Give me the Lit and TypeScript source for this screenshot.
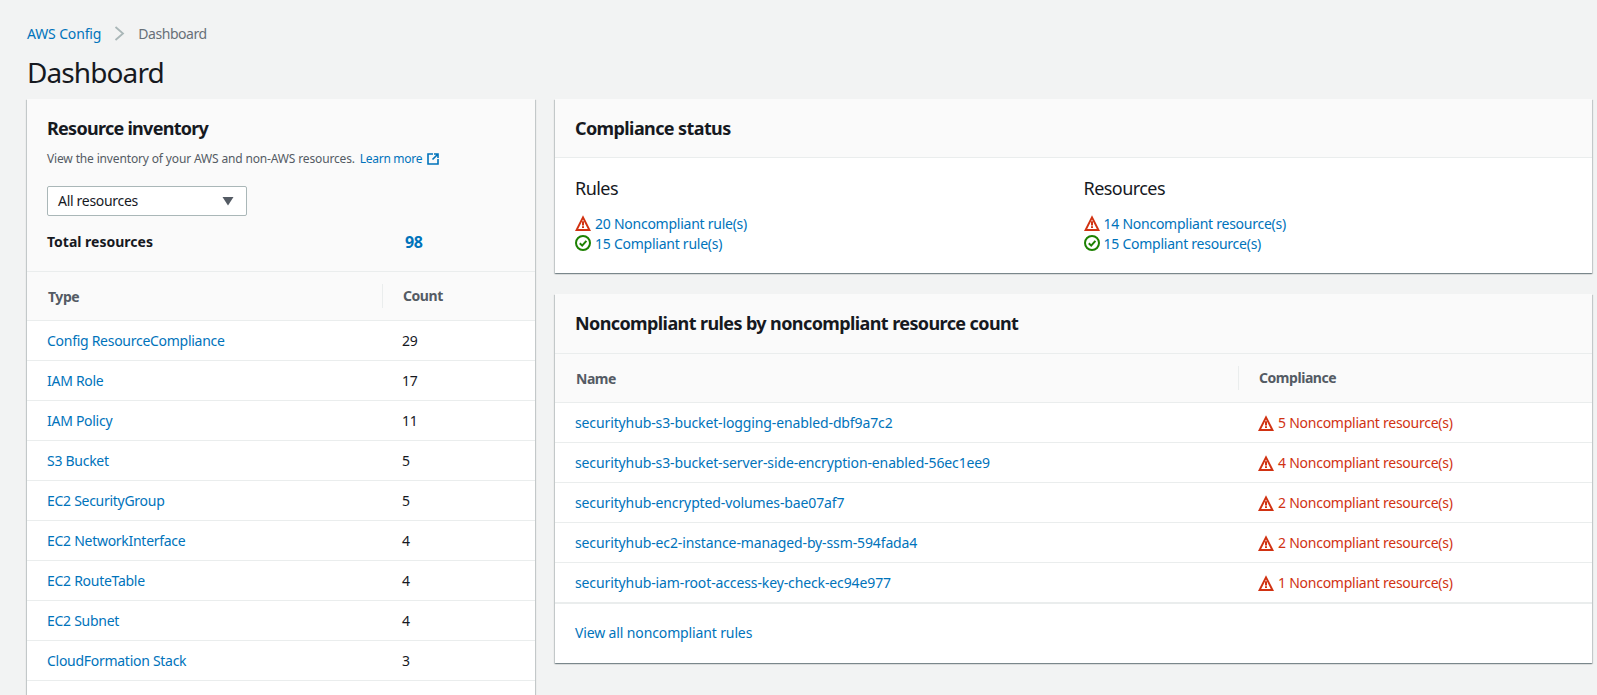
import { LitElement, html, css, svg } from 'lit';
import { customElement } from 'lit/decorators.js';

const inventory = [
  ['Config ResourceCompliance', 29],
  ['IAM Role', 17],
  ['IAM Policy', 11],
  ['S3 Bucket', 5],
  ['EC2 SecurityGroup', 5],
  ['EC2 NetworkInterface', 4],
  ['EC2 RouteTable', 4],
  ['EC2 Subnet', 4],
  ['CloudFormation Stack', 3],
];

const rules = [
  ['securityhub-s3-bucket-logging-enabled-dbf9a7c2', 5],
  ['securityhub-s3-bucket-server-side-encryption-enabled-56ec1ee9', 4],
  ['securityhub-encrypted-volumes-bae07af7', 2],
  ['securityhub-ec2-instance-managed-by-ssm-594fada4', 2],
  ['securityhub-iam-root-access-key-check-ec94e977', 1],
];

const warnIcon = html`<svg class="icon" viewBox="0 0 16 16">
  ${svg`<path fill-rule="evenodd" fill="#d13212" d="M8 0.2 16 16H0zM8 4.4 3.2 14h9.6z"/>
  <path fill="#d13212" d="M7 6.2h2v4.2H7zM7 11.2h2V13H7z"/>`}
</svg>`;

const okIcon = html`<svg class="icon" viewBox="0 0 16 16" fill="none">
  ${svg`<circle cx="8" cy="8" r="7" stroke="#1d8102" stroke-width="2"/>
  <path d="M4.8 8.2 7.2 10.6 11.4 5.8" stroke="#1d8102" stroke-width="2"/>`}
</svg>`;

@customElement('app-root')
export class AppRoot extends LitElement {
  static styles = css`
    :host {
      display: block;
      height: 695px;
      overflow: hidden;
      background: #f2f3f3;
      font-family: 'Noto Sans', sans-serif;
      font-size: 14px;
      letter-spacing: -0.25px;
      color: #16191f;
    }
    a {
      color: #0073bb;
      text-decoration: none;
    }
    .page {
      padding: 22px 5px 0 27px;
    }
    .crumbs {
      display: flex;
      align-items: center;
      height: 22px;
      color: #687078;
    }
    .crumbs a {
      letter-spacing: -0.15px;
    }
    .crumbs span {
      letter-spacing: -0.45px;
    }
    .crumbs svg {
      width: 11px;
      height: 15px;
      margin: 0 13px 0 13px;
    }
    h1 {
      margin: 10px 0 0;
      height: 45px;
      font-size: 28px;
      line-height: 36px;
      font-weight: 400;
      letter-spacing: -0.9px;
    }
    .columns {
      display: grid;
      grid-template-columns: 508px 1037px;
      gap: 20px;
      align-items: start;
    }
    .card {
      background: #fff;
      box-shadow: 0 1px 1px 0 rgba(0, 28, 36, 0.3), 1px 1px 1px 0 rgba(0, 28, 36, 0.15),
        -1px 1px 1px 0 rgba(0, 28, 36, 0.15);
    }
    .stack {
      display: grid;
      gap: 21px;
    }
    .inv-head {
      height: 173px;
      box-sizing: border-box;
      padding: 17px 20px 0;
      background: #fafafa;
      border-bottom: 1px solid #eaeded;
    }
    h2 {
      margin: 0;
      font-size: 18px;
      line-height: 24px;
      font-weight: 700;
      letter-spacing: -0.6px;
    }
    .inv-head h2 {
      letter-spacing: -0.72px;
    }
    .desc {
      margin-top: 11px;
      font-size: 12px;
      line-height: 16px;
      letter-spacing: -0.15px;
      color: #545b64;
      display: flex;
      align-items: center;
    }
    .desc a {
      margin-left: 5px;
      display: flex;
      align-items: center;
      letter-spacing: -0.3px;
    }
    .desc svg {
      width: 12px;
      height: 12px;
      margin-left: 5px;
    }
    .select {
      margin-top: 19px;
      width: 200px;
      height: 30px;
      box-sizing: border-box;
      border: 1px solid #aab7b8;
      border-radius: 2px;
      background: #fff;
      display: flex;
      align-items: center;
      justify-content: space-between;
      padding: 0 12px 0 10px;
    }
    .select span {
      letter-spacing: -0.3px;
      padding-bottom: 1px;
    }
    .select svg {
      width: 12px;
      height: 9px;
    }
    .total {
      display: grid;
      grid-template-columns: 358px 1fr;
      margin-top: 15px;
      line-height: 22px;
      font-weight: 700;
      letter-spacing: 0;
    }
    .total a {
      font-size: 16px;
      letter-spacing: -0.4px;
    }
    .row {
      display: grid;
      align-items: center;
      height: 40px;
      box-sizing: border-box;
      border-bottom: 1px solid #eaeded;
      padding-left: 20px;
    }
    .inv .row {
      grid-template-columns: 355px 1fr;
    }
    .inv .row a {
      letter-spacing: -0.28px;
    }
    .rules .row {
      grid-template-columns: 683px 1fr;
    }
    .rules .row a {
      letter-spacing: -0.12px;
    }
    .row.head {
      height: 49px;
      background: #fafafa;
      color: #545b64;
      font-weight: 700;
      font-size: 14px;
      letter-spacing: -0.45px;
      padding-left: 21px;
    }
    .head span + span {
      padding-left: 20px;
      border-left: 1px solid #eaeded;
      line-height: 24px;
    }
    .inv .row.head {
      grid-template-columns: 334px 1fr;
    }
    .rules .row.head {
      grid-template-columns: 662px 1fr;
    }
    .inv-fill {
      height: 40px;
    }
    .card-title {
      height: 59px;
      box-sizing: border-box;
      padding: 17px 20px 0;
      background: #fafafa;
      border-bottom: 1px solid #eaeded;
    }
    .status {
      display: grid;
      grid-template-columns: 1fr 1fr;
      gap: 20px;
      height: 115px;
      box-sizing: border-box;
      padding: 18px 20px 0;
    }
    h3 {
      margin: 0 0 13px;
      font-size: 18px;
      line-height: 24px;
      font-weight: 400;
      letter-spacing: -0.55px;
    }
    .stat {
      display: flex;
      align-items: center;
      gap: 4px;
      height: 20px;
    }
    .icon {
      width: 16px;
      height: 16px;
      flex: none;
    }
    .bad {
      display: flex;
      align-items: center;
      gap: 4px;
      color: #d13212;
    }
    .rules .card-title {
      height: 60px;
    }
    .rules .row.last {
      border-bottom: 2px solid #eaeded;
      height: 41px;
    }
    .view-all {
      height: 59px;
      box-sizing: border-box;
      padding: 19px 20px 0;
      line-height: 20px;
      letter-spacing: -0.13px;
    }
  `;

  render() {
    return html`
      <div class="page">
        <div class="crumbs">
          <a href="#">AWS Config</a>
          <svg viewBox="0 0 11 15" fill="none">
            ${svg`<path d="M1.5 1 9 7.5 1.5 14" stroke="#aab7b8" stroke-width="1.8"/>`}
          </svg>
          <span>Dashboard</span>
        </div>
        <h1>Dashboard</h1>
        <div class="columns">
          <div class="card inv">
            <div class="inv-head">
              <h2>Resource inventory</h2>
              <div class="desc">
                View the inventory of your AWS and non-AWS resources.
                <a href="#"
                  >Learn more
                  <svg viewBox="0 0 12 12" fill="none">
                    ${svg`<path d="M6 1H1v10h10V6M7 1h4v4M11 1 5.5 6.5" stroke="#0073bb" stroke-width="1.6"/>`}
                  </svg></a
                >
              </div>
              <div class="select">
                <span>All resources</span>
                <svg viewBox="0 0 12 9">${svg`<path d="M0.5 0h11L6 8.5z" fill="#545b64"/>`}</svg>
              </div>
              <div class="total"><span>Total resources</span><a href="#">98</a></div>
            </div>
            <div class="row head"><span>Type</span><span>Count</span></div>
            ${inventory.map(
              ([name, count]) => html`<div class="row"><a href="#">${name}</a><span>${count}</span></div>`
            )}
            <div class="inv-fill"></div>
          </div>
          <div class="stack">
            <div class="card">
              <div class="card-title"><h2>Compliance status</h2></div>
              <div class="status">
                <div>
                  <h3>Rules</h3>
                  <div class="stat">${warnIcon}<a href="#">20 Noncompliant rule(s)</a></div>
                  <div class="stat">${okIcon}<a href="#">15 Compliant rule(s)</a></div>
                </div>
                <div>
                  <h3>Resources</h3>
                  <div class="stat">${warnIcon}<a href="#">14 Noncompliant resource(s)</a></div>
                  <div class="stat">${okIcon}<a href="#">15 Compliant resource(s)</a></div>
                </div>
              </div>
            </div>
            <div class="card rules">
              <div class="card-title"><h2>Noncompliant rules by noncompliant resource count</h2></div>
              <div class="row head"><span>Name</span><span>Compliance</span></div>
              ${rules.map(
                ([name, count], i) => html`<div class="row ${i === rules.length - 1 ? 'last' : ''}">
                  <a href="#">${name}</a>
                  <span class="bad">${warnIcon}${count} Noncompliant resource(s)</span>
                </div>`
              )}
              <div class="view-all"><a href="#">View all noncompliant rules</a></div>
            </div>
          </div>
        </div>
      </div>
    `;
  }
}
